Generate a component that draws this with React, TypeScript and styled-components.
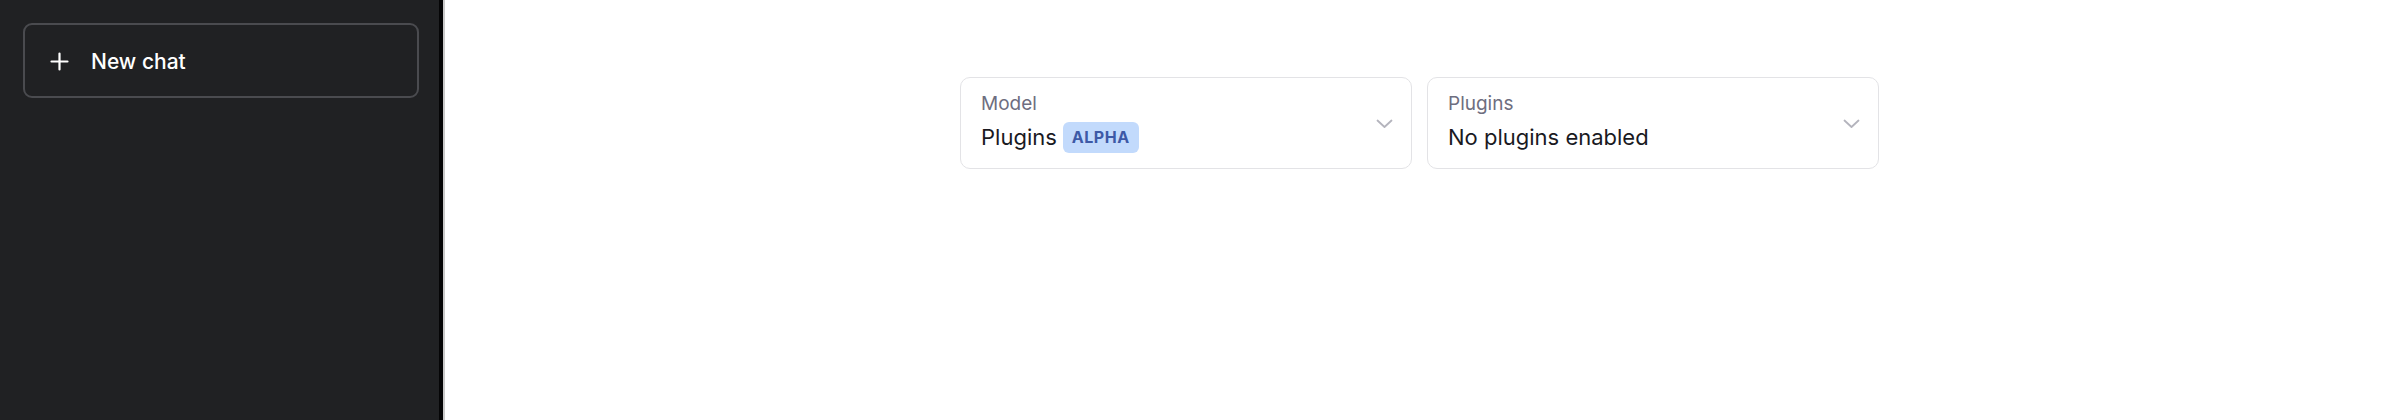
import React from 'react'
import styled, { createGlobalStyle } from 'styled-components'

const GlobalStyle = createGlobalStyle`
	html, body {
		margin: 0;
		padding: 0;
		background: #ffffff;
	}
	body {
		font-family: Inter, "Noto Sans", "Liberation Sans", sans-serif;
		-webkit-font-smoothing: antialiased;
	}
`

const Layout = styled.div`
	display: flex;
	height: 420px;
	width: 100%;
`

const Sidebar = styled.nav`
	width: 443px;
	flex-shrink: 0;
	background: #202123;
	border-right: 4px solid #050506;
	padding: 23px;
	box-sizing: border-box;
`

const NewChatButton = styled.button`
	display: flex;
	align-items: center;
	gap: 22px;
	width: 396px;
	height: 75px;
	padding: 2px 0 0 25px;
	box-sizing: border-box;
	background: transparent;
	border: 2px solid #4a4b4f;
	border-radius: 9px;
	color: #ffffff;
	font-family: inherit;
	font-size: 21px;
	font-weight: 500;
	cursor: pointer;
`

const Main = styled.main`
	flex: 1;
	border-left: 2px solid #c9c9c9;
	display: flex;
	justify-content: center;
	align-items: flex-start;
	padding: 77px 6px 0 0;
	gap: 15px;
`

const SelectCard = styled.div`
	width: 452px;
	height: 92px;
	box-sizing: border-box;
	border: 1.5px solid #e3e3e6;
	border-radius: 10px;
	padding: 12px 18px 0 20px;
	display: flex;
	align-items: center;
	justify-content: space-between;
	background: #fff;
`

const SelectText = styled.div`
	display: flex;
	flex-direction: column;
	align-self: flex-start;
`

const SelectLabel = styled.span`
	font-size: 19px;
	line-height: 27px;
	color: #6e6e80;
`

const SelectValue = styled.div`
	display: flex;
	align-items: center;
	gap: 6px;
	height: 40px;
	font-size: 22px;
	color: #1a1a1f;
`

const Badge = styled.span`
	display: inline-flex;
	align-items: center;
	height: 31px;
	padding: 0 9px;
	border-radius: 6px;
	background: #c2dafc;
	color: #3d59a6;
	font-size: 16px;
	font-weight: 700;
	letter-spacing: 0.5px;
`

const Chevron = () => (
	<svg width="17" height="10" viewBox="0 0 17 10" fill="none" style={{ marginTop: -11 }}>
		<path d="M1.5 1.5 L8.5 8 L15.5 1.5" stroke="#b4b4bd" strokeWidth="1.8" strokeLinecap="round" strokeLinejoin="round" />
	</svg>
)

const PlusIcon = () => (
	<svg width="19" height="19" viewBox="0 0 19 19" fill="none">
		<path d="M9.5 1.5 V17.5 M1.5 9.5 H17.5" stroke="#ffffff" strokeWidth="2.2" strokeLinecap="round" />
	</svg>
)

const App: React.FC = () => {
	return (
		<>
			<GlobalStyle />
			<Layout>
				<Sidebar>
					<NewChatButton>
						<PlusIcon />
						New chat
					</NewChatButton>
				</Sidebar>
				<Main>
					<SelectCard>
						<SelectText>
							<SelectLabel>Model</SelectLabel>
							<SelectValue>
								Plugins
								<Badge>ALPHA</Badge>
							</SelectValue>
						</SelectText>
						<Chevron />
					</SelectCard>
					<SelectCard>
						<SelectText>
							<SelectLabel>Plugins</SelectLabel>
							<SelectValue>No plugins enabled</SelectValue>
						</SelectText>
						<Chevron />
					</SelectCard>
				</Main>
			</Layout>
		</>
	)
}

export default App
